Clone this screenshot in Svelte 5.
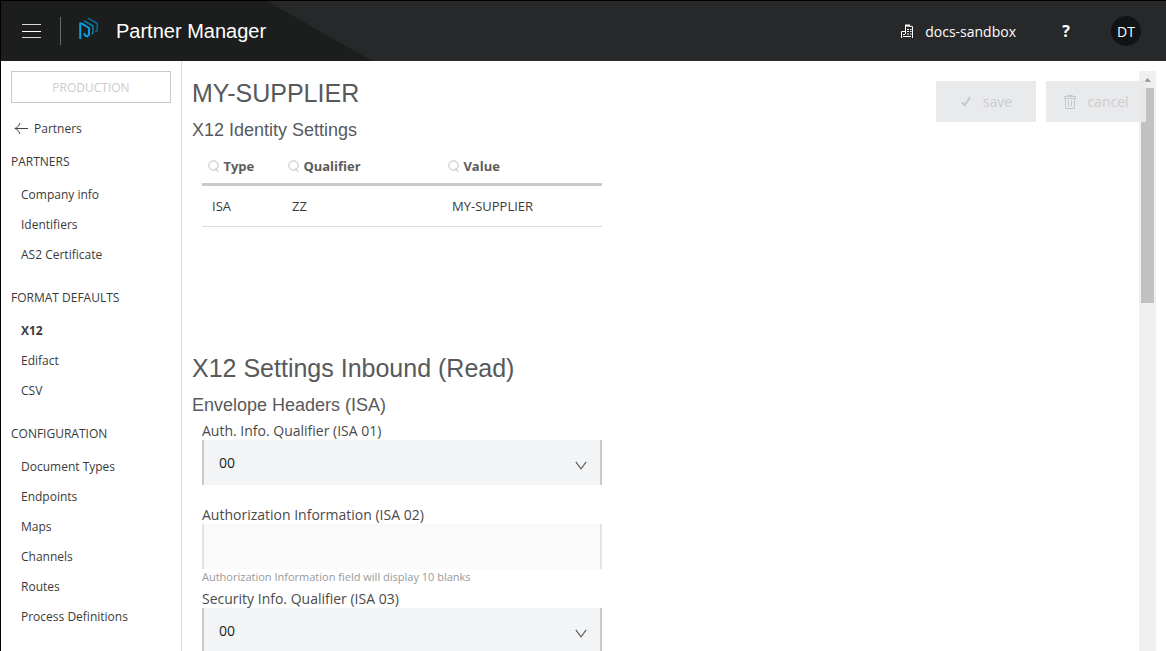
<script>
  const groups = [
    { title: 'PARTNERS', items: ['Company info', 'Identifiers', 'AS2 Certificate'] },
    { title: 'FORMAT DEFAULTS', items: ['X12', 'Edifact', 'CSV'] },
    {
      title: 'CONFIGURATION',
      items: ['Document Types', 'Endpoints', 'Maps', 'Channels', 'Routes', 'Process Definitions']
    }
  ];
  const columns = ['Type', 'Qualifier', 'Value'];
  const identities = [['ISA', 'ZZ', 'MY-SUPPLIER']];
  const fields = [
    { id: 'isa01', label: 'Auth. Info. Qualifier (ISA 01)', kind: 'select', value: '00' },
    {
      id: 'isa02',
      label: 'Authorization Information (ISA 02)',
      kind: 'text',
      hint: 'Authorization Information field will display 10 blanks'
    },
    { id: 'isa03', label: 'Security Info. Qualifier (ISA 03)', kind: 'select', value: '00' }
  ];
  let active = $state('X12');
</script>

<div class="app">
  <header>
    <button class="menu" aria-label="Menu">
      <svg width="20" height="16" viewBox="0 0 20 16" fill="none">
        <path d="M1 1.5h19M1 14.5h19" stroke="#d8d8d8" />
        <path d="M1 8.5h19" stroke="#fff" />
      </svg>
    </button>
    <span class="divider"></span>
    <svg class="logo" width="20" height="23" viewBox="0 0 20 23" fill="none" stroke-linejoin="round">
      <path d="M1.2 22V6.4L3 6.6 10 11V17.8L8 19.4 5.6 18.2V16" stroke="#0a9fe0" stroke-width="2" />
      <path d="M5 3.8L14 9V15.8L12.4 17" stroke="#0b7fb3" stroke-width="1.5" />
      <path d="M9 1.2L18.2 6.5V13.4L16.4 14.6" stroke="#0a6a93" stroke-width="1.5" />
    </svg>
    <span class="product">Partner Manager</span>
    <div class="tools">
      <button class="tenant">
        <svg width="13" height="14" viewBox="0 0 13 14" fill="none" stroke="#fff">
          <path d="M.5 14V7.5H4.5M4.5 10V1.5L11.5 2.5V14M2 10.5h2M2 12.5h8" />
          <path d="M4 1.5h5" stroke-width="2" />
          <path d="M6 5.5h2M9 5.5h1.500M6 7.500h2M9 7.500h1.500M6 10h2M9 10h1.500" />
        </svg>
        docs-sandbox
      </button>
      <button class="help" aria-label="Help">?</button>
      <button class="avatar">DT</button>
    </div>
  </header>

  <div class="body">
    <aside>
      <button class="env" disabled>PRODUCTION</button>
      <a class="back" href="#partners">
        <svg width="15" height="13" viewBox="0 0 15 13" fill="none" stroke="#444">
          <path d="M15 6.5H2M7 1C6 4 4 6 1.800 6.500 4 7 6 9 7 12" />
        </svg>
        Partners
      </a>
      <nav>
        {#each groups as group}
          <section>
            <h3>{group.title}</h3>
            <ul>
              {#each group.items as item}
                <li>
                  <a href="#{item}" class:active={active === item} onclick={() => (active = item)}>{item}</a>
                </li>
              {/each}
            </ul>
          </section>
        {/each}
      </nav>
    </aside>

    <main>
      <div class="content">
        <h1>MY-SUPPLIER</h1>
        <h2>X12 Identity Settings</h2>
        <div class="grid">
          <table>
            <colgroup><col class="narrow" /><col class="wide" /><col class="wide" /></colgroup>
            <thead>
              <tr>
                {#each columns as column}
                  <th scope="col">
                    <svg width="12" height="13" viewBox="0 0 12 13" fill="none" stroke="#bdbdbd">
                      <circle cx="5.5" cy="5.5" r="4.7" />
                      <path d="M7.5 8.5L10.5 12" />
                    </svg>
                    {column}
                  </th>
                {/each}
              </tr>
            </thead>
            <tbody>
              {#each identities as row}
                <tr>
                  {#each row as cell}<td>{cell}</td>{/each}
                </tr>
              {/each}
            </tbody>
          </table>
        </div>

        <h1>X12 Settings Inbound (Read)</h1>
        <h2>Envelope Headers (ISA)</h2>
        <div class="form">
          {#each fields as field}
            <div class="field">
              <label for={field.id}>{field.label}</label>
              {#if field.kind === 'select'}
                <div class="picker">
                  <select id={field.id} value={field.value}>
                    <option value="00">00</option>
                    <option value="03">03</option>
                  </select>
                  <svg width="12" height="9" viewBox="0 0 12 9" fill="none" stroke="#555" stroke-width="1.1">
                    <path d="M.8 .8L6 7.8 11.2 .8" />
                  </svg>
                </div>
              {:else}
                <input id={field.id} type="text" disabled />
              {/if}
              <p>{field.hint ?? ''}</p>
            </div>
          {/each}
        </div>
      </div>

      <div class="scrollbar" aria-hidden="true">
        <svg width="17" height="17" viewBox="0 0 17 17"><path d="M5 11L8.5 7 12 11z" fill="#9b9b9b" /></svg>
        <div class="thumb"></div>
      </div>

      <div class="actions">
        <button disabled>
          <svg width="12" height="11" viewBox="0 0 12 11" fill="none" stroke="#c6c7c9" stroke-width="2">
            <path d="M1.8 6.4L4.600 9 10.200 1.400" />
          </svg>
          save
        </button>
        <button disabled>
          <svg width="13" height="14" viewBox="0 0 13 14" fill="none" stroke="#c6c7c9">
            <path d="M1.5 1.500h11v2H1.500zM4.500 1.500v-1h5v1M2.500 3.500v10h9v-10M5.500 5.500v6M8.500 5.500v6" />
          </svg>
          cancel
        </button>
      </div>
    </main>
  </div>
</div>

<style>
  :global(body) {
    margin: 0;
    background: #fff;
  }
  .app,
  .app * {
    box-sizing: border-box;
  }
  .app {
    display: flex;
    flex-direction: column;
    height: 100vh;
    overflow: hidden;
    border-top: 1px solid #000;
    border-left: 1px solid #000;
    font-family: 'Open Sans', sans-serif;
    font-size: 12px;
    color: #3a3a3a;
  }
  button,
  select,
  input {
    font: inherit;
    color: inherit;
    border: 0;
    background: none;
    padding: 0;
    margin: 0;
    border-radius: 0;
  }
  svg {
    display: block;
    flex: none;
  }
  a {
    color: inherit;
    text-decoration: none;
  }
  h1,
  h2,
  h3,
  p,
  ul {
    margin: 0;
    padding: 0;
    font-weight: 400;
    list-style: none;
  }

  header {
    flex: none;
    display: flex;
    align-items: center;
    height: 60px;
    padding: 0 25px 0 20px;
    color: #fff;
    background: #27282a;
    position: relative;
    isolation: isolate;
  }
  header::before {
    content: '';
    position: absolute;
    inset: 0 auto 0 0;
    width: 371px;
    z-index: -1;
    background: #1c1e1d;
    clip-path: polygon(0 0, 266px 0, 100% 100%, 0 100%);
  }
  .menu {
    width: 20px;
  }
  .divider {
    width: 1px;
    height: 28px;
    margin: 0 18px 0 19px;
    background: #67696a;
  }
  .logo {
    margin-bottom: 5px;
  }
  .product {
    margin-left: 17px;
    font: 20px/24px 'Liberation Sans', Arial, sans-serif;
  }
  .tools {
    display: flex;
    align-items: center;
    margin-left: auto;
    font-size: 14px;
  }
  .tenant {
    display: flex;
    align-items: center;
    gap: 11px;
  }
  .help {
    width: 20px;
    margin: 0 35px 0 40px;
    font-weight: 700;
    font-size: 16px;
  }
  .avatar {
    width: 30px;
    height: 30px;
    border-radius: 50%;
    background: #121314;
  }

  .body {
    flex: 1;
    display: flex;
    min-height: 0;
  }
  aside {
    flex: none;
    width: 181px;
    padding: 10px;
    border-right: 1px solid #ddd;
  }
  .env {
    display: block;
    width: 100%;
    height: 32px;
    border: 1px solid #c8c8c8;
    color: #ccc;
  }
  .back {
    display: flex;
    align-items: center;
    gap: 6px;
    height: 30px;
    margin: 10px 0 4px 2px;
  }
  h3 {
    font-size: 12px;
    line-height: 30px;
  }
  ul {
    padding: 3px 10px 13px;
  }
  li {
    line-height: 30px;
  }
  li a {
    display: block;
  }
  li a.active {
    font-weight: 700;
  }

  main {
    flex: 1;
    display: flex;
    min-width: 0;
    padding: 10px 10px 0;
    position: relative;
  }
  .content {
    flex: 1;
    min-width: 0;
    overflow: hidden;
  }
  h1 {
    font: 25px/44px 'Liberation Sans', Arial, sans-serif;
    color: #58595b;
  }
  h2 {
    font: 18px/30px 'Liberation Sans', Arial, sans-serif;
    color: #58595b;
  }
  .grid {
    min-height: 201px;
    padding: 3px 10px;
  }
  table {
    width: 400px;
    table-layout: fixed;
    border-collapse: separate;
    border-spacing: 0;
    font-size: 13px;
  }
  .narrow {
    width: 20%;
  }
  .wide {
    width: 40%;
  }
  th {
    height: 38px;
    padding: 0 6px;
    text-align: left;
    color: #5c5c5c;
    border-bottom: 3px solid #c8c9ca;
  }
  th svg {
    display: inline-block;
    vertical-align: -2px;
  }
  td {
    height: 41px;
    padding: 0 10px;
    border-bottom: 1px solid #ddd;
  }

  .form {
    padding: 0 10px;
  }
  .field {
    width: 400px;
    color: #4a4a4a;
  }
  label {
    display: block;
    padding-top: 1px;
    font-size: 14px;
    line-height: 19px;
  }
  .picker {
    position: relative;
  }
  select,
  input {
    display: block;
    width: 100%;
    height: 45px;
    padding: 0 15px;
    border: solid #c8c9cc;
    border-width: 0 2px;
    background: #f3f4f6;
    color: #222;
    font-size: 14px;
    appearance: none;
  }
  input:disabled {
    background: #fafafa;
    border-color: #e3e3e4;
  }
  .picker svg {
    position: absolute;
    right: 15px;
    top: 21px;
    pointer-events: none;
  }
  .field p {
    height: 19px;
    font-size: 11px;
    line-height: 16px;
    color: #999;
  }

  .scrollbar {
    flex: none;
    width: 17px;
    background: #f0f0f0;
  }
  .thumb {
    width: 13px;
    height: 37%;
    margin: 0 2px;
    background: #c1c1c1;
  }
  .actions {
    position: absolute;
    top: 20px;
    right: 20px;
    display: flex;
    gap: 10px;
  }
  .actions button {
    display: flex;
    align-items: center;
    justify-content: center;
    gap: 11px;
    width: 100px;
    height: 41px;
    background: rgba(232, 233, 235, 0.94);
    color: #cbccce;
    font-size: 14px;
  }
</style>
